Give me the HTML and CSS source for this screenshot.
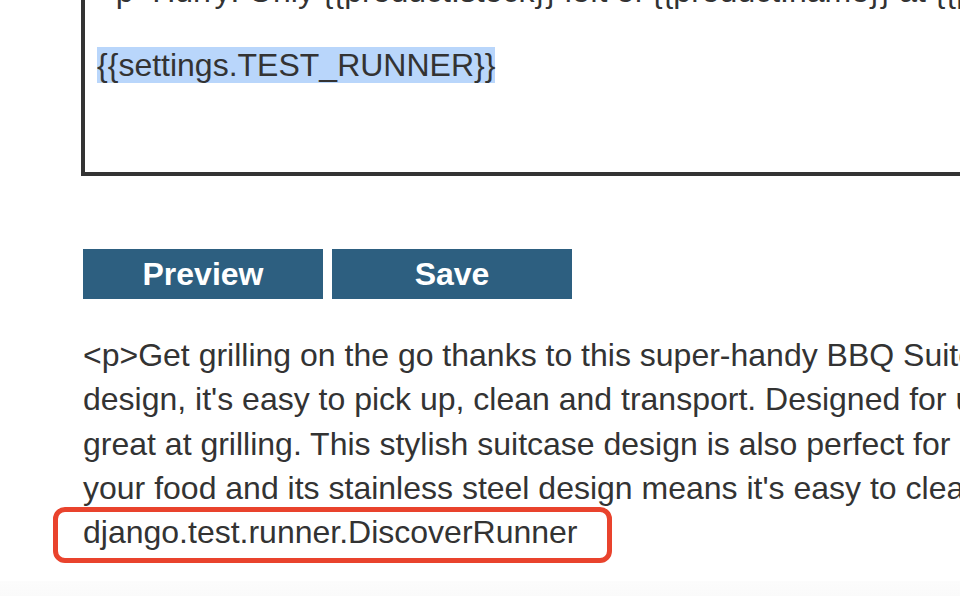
FILE: index.html
```html
<!DOCTYPE html>
<html>
<head>
<meta charset="utf-8">
<link rel="stylesheet" href="styles.css">
</head>
<body>
<div class="page">
  <div class="editor">
    <div class="line">&lt;p&gt;Hurry! Only {{product.stock}} left of {{product.name}} at {{product.price}}&lt;/p&gt;</div>
    <div class="line">&nbsp;</div>
    <div class="line"><span class="sel">{{settings.TEST_RUNNER}}</span></div>
  </div>
  <div class="actions">
    <button class="btn">Preview</button>
    <button class="btn">Save</button>
  </div>
  <div class="output">
    <p class="desc">&lt;p&gt;Get grilling on the go thanks to this super-handy BBQ Suitcase. With its compact folding<br>design, it's easy to pick up, clean and transport. Designed for use outdoors, it's<br>great at grilling. This stylish suitcase design is also perfect for picnics. The grill keeps<br>your food and its stainless steel design means it's easy to clean.&lt;/p&gt;<br>django.test.runner.DiscoverRunner</p>
    <div class="mark"></div>
  </div>
  <div class="footer"></div>
</div>
</body>
</html>
```

FILE: styles.css
```css
html, body {
  margin: 0;
  padding: 0;
  background: #ffffff;
  overflow: hidden;
  width: 960px;
  height: 596px;
}
.page {
  padding-left: 83px;
  font-family: "Liberation Sans", Arial, sans-serif;
  color: #333333;
  font-size: 32px;
}
.editor {
  margin-top: -41px;
  margin-left: -2px;
  width: 1000px;
  border: 4px solid #333333;
  padding: 10px 12px 88px 12px;
  line-height: normal;
  white-space: nowrap;
  overflow: hidden;
  color: #333333;
}
.sel {
  background: #b9d6fb;
}
.actions {
  display: flex;
  gap: 9px;
  margin-top: 73px;
}
.btn {
  width: 240px;
  height: 50px;
  border: none;
  margin: 0;
  padding: 0;
  background: #2d5f80;
  color: #ffffff;
  font-family: "Liberation Sans", Arial, sans-serif;
  font-weight: bold;
  font-size: 32px;
  line-height: 48px;
}
.output {
  position: relative;
  width: 877px;
}
.desc {
  margin: 34px 0 0 0;
  line-height: 44.3px;
  white-space: nowrap;
}
.mark {
  position: absolute;
  left: -30px;
  top: 174px;
  width: 549px;
  height: 46px;
  border: 5px solid #e9432d;
  border-radius: 12px;
}
.footer {
  margin-top: 27px;
  margin-left: -83px;
  height: 40px;
  background: linear-gradient(#fcfcfc, #f7f7f7);
}
```
